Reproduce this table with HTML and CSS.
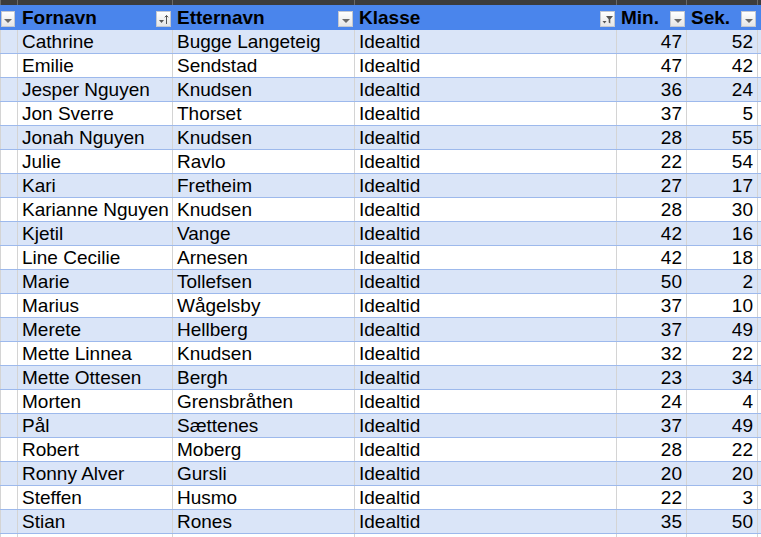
FILE: index.html
```html
<!DOCTYPE html>
<html>
<head>
<meta charset="utf-8">
<link rel="stylesheet" href="styles.css">
</head>
<body>
<div class="sheet">
<table class="grid">
  <colgroup>
    <col class="c0"><col class="c1"><col class="c2"><col class="c3"><col class="c4"><col class="c5"><col class="c6">
  </colgroup>
  <tr class="strip"><td></td><td></td><td></td><td></td><td></td><td></td><td></td></tr>
  <tr class="head">
    <th><div class="hc"><span class="btn"><span class="tri"></span></span></div></th>
    <th><div class="hc"><span class="ht">Fornavn</span><span class="btn"><svg width="13" height="13" viewBox="0 0 13 13"><path d="M2 7h5l-2.5 3z" fill="#555"/><path d="M9.5 11V2.5M7.8 4.3L9.5 2.5 11.2 4.3" stroke="#555" stroke-width="1" fill="none"/></svg></span></div></th>
    <th><div class="hc"><span class="ht">Etternavn</span><span class="btn"><span class="tri"></span></span></div></th>
    <th><div class="hc"><span class="ht">Klasse</span><span class="btn"><svg width="13" height="13" viewBox="0 0 13 13"><path d="M1.5 8h4l-2 2.5z" fill="#555"/><path d="M5 3h7l-2.7 3.3v4.2l-1.6-1v-3.2z" fill="#555"/></svg></span></div></th>
    <th><div class="hc"><span class="ht">Min.</span><span class="btn"><span class="tri"></span></span></div></th>
    <th><div class="hc"><span class="ht">Sek.</span><span class="btn"><span class="tri"></span></span></div></th>
    <th></th>
  </tr>
  <tr class="band"><td></td><td>Cathrine</td><td>Bugge Langeteig</td><td>Idealtid</td><td class="n">47</td><td class="n">52</td><td></td></tr>
  <tr><td></td><td>Emilie</td><td>Sendstad</td><td>Idealtid</td><td class="n">47</td><td class="n">42</td><td></td></tr>
  <tr class="band"><td></td><td>Jesper Nguyen</td><td>Knudsen</td><td>Idealtid</td><td class="n">36</td><td class="n">24</td><td></td></tr>
  <tr><td></td><td>Jon Sverre</td><td>Thorset</td><td>Idealtid</td><td class="n">37</td><td class="n">5</td><td></td></tr>
  <tr class="band"><td></td><td>Jonah Nguyen</td><td>Knudsen</td><td>Idealtid</td><td class="n">28</td><td class="n">55</td><td></td></tr>
  <tr><td></td><td>Julie</td><td>Ravlo</td><td>Idealtid</td><td class="n">22</td><td class="n">54</td><td></td></tr>
  <tr class="band"><td></td><td>Kari</td><td>Fretheim</td><td>Idealtid</td><td class="n">27</td><td class="n">17</td><td></td></tr>
  <tr><td></td><td>Karianne Nguyen</td><td>Knudsen</td><td>Idealtid</td><td class="n">28</td><td class="n">30</td><td></td></tr>
  <tr class="band"><td></td><td>Kjetil</td><td>Vange</td><td>Idealtid</td><td class="n">42</td><td class="n">16</td><td></td></tr>
  <tr><td></td><td>Line Cecilie</td><td>Arnesen</td><td>Idealtid</td><td class="n">42</td><td class="n">18</td><td></td></tr>
  <tr class="band"><td></td><td>Marie</td><td>Tollefsen</td><td>Idealtid</td><td class="n">50</td><td class="n">2</td><td></td></tr>
  <tr><td></td><td>Marius</td><td>Wågelsby</td><td>Idealtid</td><td class="n">37</td><td class="n">10</td><td></td></tr>
  <tr class="band"><td></td><td>Merete</td><td>Hellberg</td><td>Idealtid</td><td class="n">37</td><td class="n">49</td><td></td></tr>
  <tr><td></td><td>Mette Linnea</td><td>Knudsen</td><td>Idealtid</td><td class="n">32</td><td class="n">22</td><td></td></tr>
  <tr class="band"><td></td><td>Mette Ottesen</td><td>Bergh</td><td>Idealtid</td><td class="n">23</td><td class="n">34</td><td></td></tr>
  <tr><td></td><td>Morten</td><td>Grensbråthen</td><td>Idealtid</td><td class="n">24</td><td class="n">4</td><td></td></tr>
  <tr class="band"><td></td><td>Pål</td><td>Sættenes</td><td>Idealtid</td><td class="n">37</td><td class="n">49</td><td></td></tr>
  <tr><td></td><td>Robert</td><td>Moberg</td><td>Idealtid</td><td class="n">28</td><td class="n">22</td><td></td></tr>
  <tr class="band"><td></td><td>Ronny Alver</td><td>Gursli</td><td>Idealtid</td><td class="n">20</td><td class="n">20</td><td></td></tr>
  <tr><td></td><td>Steffen</td><td>Husmo</td><td>Idealtid</td><td class="n">22</td><td class="n">3</td><td></td></tr>
  <tr class="band"><td></td><td>Stian</td><td>Rones</td><td>Idealtid</td><td class="n">35</td><td class="n">50</td><td></td></tr>
  <tr class="empty"><td></td><td></td><td></td><td></td><td></td><td></td><td></td></tr>
</table>
</div>
</body>
</html>
```

FILE: styles.css
```css
html, body {
  margin: 0;
  padding: 0;
  background: #ffffff;
}
.sheet {
  width: 761px;
  height: 537px;
  overflow: hidden;
}
.grid {
  border-collapse: collapse;
  table-layout: fixed;
  width: 800px;
  font-family: "Liberation Sans", Arial, sans-serif;
  font-size: 19px;
  color: #000;
}
.c0 { width: 17px; }
.c1 { width: 155px; }
.c2 { width: 182px; }
.c3 { width: 262px; }
.c4 { width: 70px; }
.c5 { width: 71px; }
.c6 { width: 43px; }
.grid td, .grid th {
  padding: 0 4px 0 4px;
  height: 23px;
  border-left: 1px solid #d4d4d4;
  border-bottom: 1px solid #9db9ec;
  white-space: nowrap;
  overflow: hidden;
  vertical-align: middle;
  line-height: 23px;
}
.grid td.n {
  text-align: right;
  padding-right: 4px;
}
.strip td {
  height: 5px;
  line-height: 5px;
  font-size: 0;
  background: #3c3c3c;
  border-left: 1px solid #6a6a6a;
  border-bottom: none;
}
.head th {
  background: #4a85ec;
  border-left: 1px solid #4a85ec;
  border-bottom: none;
  height: 25px;
  padding: 0 1px 0 4px;
  text-align: left;
  font-weight: bold;
}
.head th:first-child { padding: 0 2px 0 0; }
.hc {
  display: flex;
  align-items: center;
  height: 25px;
}
.ht { flex: 1; }
.btn {
  margin-left: auto;
  margin-top: 3px;
  width: 13px;
  height: 14px;
  border: 1px solid #c4c8d0;
  background: linear-gradient(#ffffff, #e6e6e6);
  display: flex;
  align-items: center;
  justify-content: center;
}
.tri {
  width: 0;
  height: 0;
  border-left: 4px solid transparent;
  border-right: 4px solid transparent;
  border-top: 4px solid #6b6b6b;
  margin-top: 3px;
}
.band td {
  background: #dae5f8;
}
.empty td { border-bottom: none; }
```
